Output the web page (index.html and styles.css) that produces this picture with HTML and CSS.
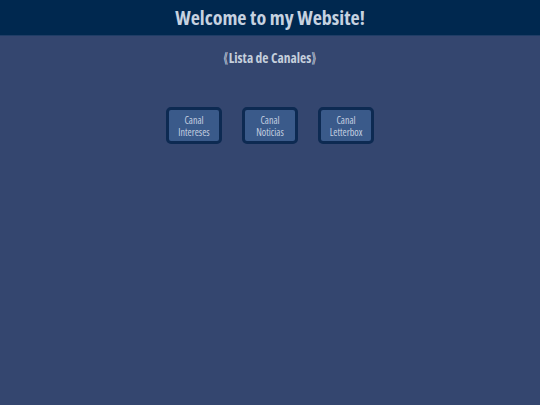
FILE: index.html
```html
<!DOCTYPE html>
<html>
<head>
<meta charset="utf-8">
<link rel="stylesheet" href="styles.css">
</head>
<body>
<header class="top">
  <h1 class="title">Welcome to my Website!</h1>
</header>
<main class="content">
  <h2 class="subtitle"><span class="bracket">《</span>Lista de Canales<span class="bracket">》</span></h2>
  <div class="channels">
    <a class="channel">Canal<br>Intereses</a>
    <a class="channel">Canal<br>Noticias</a>
    <a class="channel">Canal<br>Letterbox</a>
  </div>
</main>
</body>
</html>
```
FILE: styles.css
```css
html, body {
  margin: 0;
  padding: 0;
  height: 100%;
}
body {
  background: #34466f;
  font-family: "Open Sans", "Noto Sans CJK SC", sans-serif;
  font-stretch: condensed;
  color: #c3cfde;
}
.top {
  background: #00284f;
  height: 35px;
  border-bottom: 1px solid #1f3d66;
  display: flex;
  align-items: center;
  justify-content: center;
}
.title {
  margin: 0;
  font-size: 20px;
  font-weight: bold;
  color: #c6d2e0;
}
.content {
  display: flex;
  flex-direction: column;
  align-items: center;
}
.subtitle {
  margin: 11px 0 0;
  font-size: 13.5px;
  font-weight: bold;
  color: #c5cfdc;
}
.bracket {
  display: inline-block;
  transform: scaleX(0.6);
  margin: 0 -2px;
}
.channels {
  margin-top: 40px;
  display: flex;
  gap: 20px;
}
.channel {
  box-sizing: border-box;
  width: 56px;
  height: 37px;
  border: 3px solid #0d2a52;
  border-radius: 5px;
  background: #3a5a8a;
  color: #c3cfe0;
  font-size: 10px;
  line-height: 12px;
  text-align: center;
  display: flex;
  align-items: center;
  justify-content: center;
}
```
